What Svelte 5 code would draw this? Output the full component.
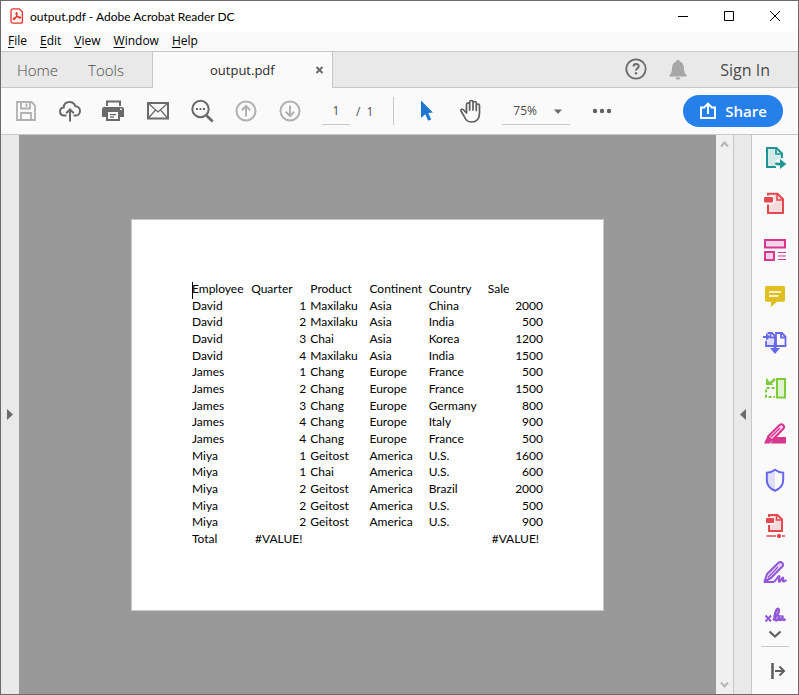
<script>
  const menus = ['File', 'Edit', 'View', 'Window', 'Help'];

  const columns = ['Employee', 'Quarter', 'Product', 'Continent', 'Country', 'Sale'];
  const rows = [
    ['David', 1, 'Maxilaku', 'Asia', 'China', 2000],
    ['David', 2, 'Maxilaku', 'Asia', 'India', 500],
    ['David', 3, 'Chai', 'Asia', 'Korea', 1200],
    ['David', 4, 'Maxilaku', 'Asia', 'India', 1500],
    ['James', 1, 'Chang', 'Europe', 'France', 500],
    ['James', 2, 'Chang', 'Europe', 'France', 1500],
    ['James', 3, 'Chang', 'Europe', 'Germany', 800],
    ['James', 4, 'Chang', 'Europe', 'Italy', 900],
    ['James', 4, 'Chang', 'Europe', 'France', 500],
    ['Miya', 1, 'Geitost', 'America', 'U.S.', 1600],
    ['Miya', 1, 'Chai', 'America', 'U.S.', 600],
    ['Miya', 2, 'Geitost', 'America', 'Brazil', 2000],
    ['Miya', 2, 'Geitost', 'America', 'U.S.', 500],
    ['Miya', 2, 'Geitost', 'America', 'U.S.', 900]
  ];

  let page = $state('1');
  let zoom = $state('75%');
</script>

<div class="window">
  <header class="titlebar">
    <svg class="logo" width="14" height="16" viewBox="0 0 14 16" fill="none" stroke="#e8352b">
      <path d="M3 .8h6.2L12.4 4v9.2a2 2 0 0 1-2 2H3a2 2 0 0 1-2-2V2.8a2 2 0 0 1 2-2z" fill="#fff5f4" stroke-width="1.3" />
      <path d="M3.4 11.3c-.6-.9 1.500-1.900 3.300-2.300 2-.5 4-.3 4 .6 0 1.100-2.400.3-3.700-1.600C6 6.600 5.700 4.600 6.500 4.500c1 0 .6 2.300-.3 4.200-.9 1.900-2.200 3.400-2.800 2.600z" stroke-width="1.1" />
    </svg>
    <span class="caption">output.pdf - Adobe Acrobat Reader DC</span>
    <div class="wincontrols">
      <button aria-label="Minimize"><svg width="12" height="12" viewBox="0 0 12 12"><path d="M1 6.500h10" /></svg></button>
      <button aria-label="Maximize"><svg width="12" height="12" viewBox="0 0 12 12"><path d="M1.500 1.500h9v9h-9z" /></svg></button>
      <button aria-label="Close"><svg width="12" height="12" viewBox="0 0 12 12"><path d="M1 1l10 10M11 1L1 11" /></svg></button>
    </div>
  </header>

  <nav class="menubar">
    {#each menus as m}
      <button><u>{m[0]}</u>{m.slice(1)}</button>
    {/each}
  </nav>

  <div class="tabs">
    <div class="fixedtabs">
      <button class="home">Home</button>
      <button class="tools">Tools</button>
    </div>
    <div class="doctab">
      <span>output.pdf</span>
      <button aria-label="Close tab">
        <svg width="9" height="9" viewBox="0 0 9 9" stroke="#6a6a6a" stroke-width="2"><path d="M1.500 1l6 6M7.500 1l-6 6" /></svg>
      </button>
    </div>
    <div class="account">
      <button aria-label="Help">
        <svg width="24" height="24" viewBox="0 0 24 24" fill="none" stroke="#6a6a6a">
          <circle cx="12" cy="11" r="9.700" stroke-width="1.800" />
          <path d="M9.500 8.500c0-3.300 5.200-3.200 5.200-.3 0 2-2.700 2-2.700 4.300" stroke-width="2" />
          <path d="M10.900 14.200h2.200v2.200h-2.200z" fill="#6a6a6a" stroke="none" />
        </svg>
      </button>
      <button aria-label="Notifications">
        <svg width="24" height="24" viewBox="0 0 24 24" fill="#a6a6a6">
          <path d="M12 2c1 0 1.700.6 1.700 1.600 2.800.8 4 3 4.200 6 .2 4 .5 6 2.600 7.400v1.500h-17V17c2.100-1.400 2.400-3.400 2.600-7.400.2-3 1.400-5.200 4.200-6C10.300 2.600 11 2 12 2zM9.500 19.500h5c-.3 1.400-1.300 2-2.500 2s-2.200-.6-2.500-2z" />
        </svg>
      </button>
      <button class="signin">Sign In</button>
    </div>
  </div>

  <div class="toolbar">
    <button class="tool" aria-label="Save">
      <svg width="24" height="24" viewBox="0 0 24 24" fill="none" stroke="#b1b1b1" stroke-width="1.800">
        <path d="M3 3h14.500L21 6.500V21H3z" /><path d="M7 3v6.500h9V3M7 21v-7h10v7" /><path d="M12.500 4.500V8" />
      </svg>
    </button>
    <button class="tool" aria-label="Upload">
      <svg width="24" height="24" viewBox="0 0 24 24" fill="none" stroke="#6a6a6a" stroke-width="2">
        <path d="M8.500 16.500H6.500C3.600 16.500 2 14.700 2 12.500c0-2 1.400-3.700 3.700-3.900C5.800 5 8.300 3 11.500 3c3 0 5 1.700 5.800 4.300 2.900 0 4.700 2 4.700 4.600 0 2.700-2 4.600-4.500 4.600h-2" />
        <path d="M12 22.500V11M8.200 14.300L12 10.500l3.800 3.800" />
      </svg>
    </button>
    <button class="tool" aria-label="Print">
      <svg width="24" height="24" viewBox="0 0 24 24" fill="#6a6a6a">
        <path d="M4 1.500h15V7H4zM6 3.500V7h11V3.500zM2 8h18q2 0 2 2v8h-4v4H4v-4H0v-8q0-2 2-2zM6 13v7h10v-7z" fill-rule="evenodd" />
        <path d="M8 15h6v1.200H8zM8 17.500h4v1.200H8z" /><path d="M18 9.500h1.800v1.500H18z" fill="#fafafa" />
      </svg>
    </button>
    <button class="tool" aria-label="Email">
      <svg width="24" height="24" viewBox="0 0 24 24" fill="none" stroke="#6a6a6a">
        <path d="M2 4h20v15.500H2z" stroke-width="2" /><path d="M2.500 4.500L12 13l9.500-8.500M2.500 19l7-8M21.500 19l-7-8" stroke-width="1.200" />
      </svg>
    </button>
    <button class="tool" aria-label="Find">
      <svg width="24" height="24" viewBox="0 0 24 24" fill="none" stroke="#6a6a6a">
        <circle cx="10.500" cy="10" r="8.200" stroke-width="2" /><path d="M16.500 16.500l6.200 6" stroke-width="2.800" />
        <path d="M6 9h2v2H6zM9.500 9h2v2h-2zM13 9h2v2h-2z" fill="#6a6a6a" stroke="none" />
      </svg>
    </button>
    <button class="tool" aria-label="Previous page">
      <svg width="24" height="24" viewBox="0 0 24 24" fill="none" stroke="#b1b1b1" stroke-width="2">
        <circle cx="12" cy="12" r="9.500" /><path d="M12 17.500V7.500M7.800 11.300L12 7l4.200 4.300" />
      </svg>
    </button>
    <button class="tool" aria-label="Next page">
      <svg width="24" height="24" viewBox="0 0 24 24" fill="none" stroke="#b1b1b1" stroke-width="2">
        <circle cx="12" cy="12" r="9.500" /><path d="M12 6.500v10M7.800 12.700L12 17l4.200-4.300" />
      </svg>
    </button>
    <label class="pager"><input aria-label="Page number" bind:value={page} /><span>/</span><span>1</span></label>
    <span class="divider"></span>
    <button class="tool" aria-label="Select">
      <svg width="24" height="24" viewBox="0 0 24 24" fill="#1f76d2"><path d="M6 1.500L18 13.500l-4.700.6 2.900 6.400-3 1.300-2.900-6.500L6 19z" /></svg>
    </button>
    <button class="tool" aria-label="Hand">
      <svg width="24" height="24" viewBox="0 0 24 24" fill="none" stroke="#5f5f5f" stroke-width="1.700" stroke-linejoin="round" stroke-linecap="round">
        <path d="M7.500 14V5.500c0-2.200 3.200-2.200 3.200 0V11M10.700 11V3c0-2 3.300-2 3.300 0v8M14 4c0-2 3.300-2 3.300 0v7.500M17.300 6.500c0-2 3.200-2 3.200 0V14c0 5.500-2.500 9-8 9-4.500 0-6-2.500-7.800-6.500L1.900 12c-.5-1.600 1.500-2.400 2.800-1L7.500 14" />
      </svg>
    </button>
    <div class="zoom">
      <select aria-label="Zoom level" bind:value={zoom}><option>75%</option><option>100%</option></select>
      <svg width="8" height="5" viewBox="0 0 8 5" fill="#6a6a6a"><path d="M0 .5h8L4 5z" /></svg>
    </div>
    <button class="tool more" aria-label="More tools">
      <svg width="24" height="24" viewBox="0 0 24 24" fill="#5f5f5f"><circle cx="5" cy="12" r="2.200" /><circle cx="12" cy="12" r="2.200" /><circle cx="19" cy="12" r="2.200" /></svg>
    </button>
    <button class="share">
      <svg width="18" height="18" viewBox="0 0 18 18" fill="none" stroke="#fff" stroke-width="2"><path d="M6 5.500H2V16h14V5.500h-4M9 12V2M5.700 5L9 1.700 12.300 5" /></svg>
      Share
    </button>
  </div>

  <main>
    <button class="leftrail" aria-label="Show navigation pane">
      <svg width="6" height="11" viewBox="0 0 6 11" fill="#6a6a6a"><path d="M0 0l6 5.500L0 11z" /></svg>
    </button>

    <section class="canvas">
      <article class="page">
        <span class="caret"></span>
        <table>
          <thead>
            <tr>{#each columns as c}<th>{c}</th>{/each}</tr>
          </thead>
          <tbody>
            {#each rows as row}
              <tr>{#each row as cell}<td class:num={typeof cell === 'number'}>{cell}</td>{/each}</tr>
            {/each}
            <tr><td>Total</td><td class="err">#VALUE!</td><td></td><td></td><td></td><td class="err">#VALUE!</td></tr>
          </tbody>
        </table>
      </article>
    </section>

    <div class="scrollbar">
      <svg width="9" height="7" viewBox="0 0 9 7"><path d="M1 5.500l3.500-4 3.500 4" /></svg>
      <svg width="9" height="7" viewBox="0 0 9 7"><path d="M1 1.500l3.500 4 3.500-4" /></svg>
    </div>

    <button class="rightrail" aria-label="Hide tools pane">
      <svg width="6" height="11" viewBox="0 0 6 11" fill="#6a6a6a"><path d="M6 0L0 5.500 6 11z" /></svg>
    </button>

    <aside>
      <div class="toollist">
        <button aria-label="Export PDF">
          <svg viewBox="0 0 24 24" fill="none" stroke="#1f9494" stroke-width="2">
            <path d="M4 2h9.500L19 7.500V21H4z" fill="#d3ebe8" stroke="none" /><path d="M19 12V7.500L13.500 2H4v19h9" /><path d="M13 2.500V8h5.500" stroke-width="1.600" />
            <circle cx="17" cy="18" r="5" fill="#fafafa" stroke="none" /><path d="M12.500 17c1 1.300 2.500 1.300 5 1" stroke-width="2.600" /><path d="M17 13l6.300 5-6.300 5z" fill="#1f9494" stroke="none" />
          </svg>
        </button>
        <button aria-label="Create PDF">
          <svg viewBox="0 0 24 24" fill="none" stroke="#e34850" stroke-width="2">
            <path d="M5 1.700h9.500l5.500 5.500V21H5z" fill="#f7dadb" /><path d="M14 2.500V8h5.500" stroke-width="1.600" /><path d="M3 3.500h7l2 6.500-3 2.500H3z" fill="#fafafa" stroke="none" /><rect x="1" y="5" width="9" height="5.500" rx="1" fill="#e34850" stroke="none" />
          </svg>
        </button>
        <button aria-label="Organize pages">
          <svg viewBox="0 0 24 24" fill="#f5d3e8" stroke="#d83790" stroke-width="2">
            <rect x="2" y="2" width="20" height="7.500" /><rect x="2" y="14" width="9" height="8" /><path d="M15 14.500h8M15 18h8M15 21.500h8" stroke-width="1.200" />
          </svg>
        </button>
        <button aria-label="Comment">
          <svg viewBox="0 0 24 24" fill="#dfbf22"><path d="M3.500 2h17Q22 2 22 3.500v12.700q0 1.500-1.500 1.500H14L8 23v-5.300H3.500q-1.500 0-1.500-1.500V3.500Q2 2 3.500 2z" /><path d="M6 8h12M6 12h9.500" stroke="#fff" stroke-width="1.500" /></svg>
        </button>
        <button aria-label="Combine files">
          <svg viewBox="0 0 24 24" fill="none" stroke="#6767ec" stroke-width="2">
            <path d="M3 9h8v6H3z" fill="#dedef9" stroke="none" /><path d="M4.500 3H9l3 3v10H3v-5M12 16h10.500V6.500L19 3h-6v13M18 3v4.500h4.500M7.500 3v4.500H12" stroke-width="1.800" />
            <path d="M0 6h3V3l4.500 4L3 10.500V8H0zM10.700 13h2.600v5H17l-5 6-5-6h3.700z" fill="#6767ec" stroke="none" />
          </svg>
        </button>
        <button aria-label="Compress">
          <svg viewBox="0 0 24 24" fill="none" stroke="#7ccc38" stroke-width="2">
            <rect x="14" y="3" width="8" height="18.500" fill="#e0f2cf" /><path d="M11.500 12H3v9h9" stroke-dasharray="3 2" /><path d="M12 3l-5 4.500" stroke-width="2.400" /><path d="M3 2l2 1.500 1 2L10.500 9H3z" fill="#7ccc38" stroke="none" />
          </svg>
        </button>
        <button aria-label="Redact">
          <svg viewBox="0 0 24 24" fill="#d83790">
            <path d="M13 15h10v6.500H7.500z" /><path d="M5 14.500L16.500 3q2-1.500 3.800.2 1.600 1.800 0 3.600L9 18.500z" fill="#f5d3e8" stroke="#d83790" stroke-width="2" /><path d="M4 15l5 4-2.500 2.500H1z" /><path d="M8 15l9-9" stroke="#d83790" stroke-width="1.200" />
          </svg>
        </button>
        <button aria-label="Protect">
          <svg viewBox="0 0 24 24" fill="none"><path d="M12 2c-2.500 2-5 2.700-8 2.700V12c0 5 3 8.500 8 10.500z" fill="#dedef9" /><path d="M12 1.800c2.500 2 5 2.900 8.200 2.900V12c0 5-3.200 8.700-8.200 10.700C7 20.700 3.800 17 3.800 12V4.700c3.200 0 5.700-.9 8.200-2.900z" stroke="#6767ec" stroke-width="2" /></svg>
        </button>
        <button aria-label="Optimize PDF">
          <svg viewBox="0 0 24 24" fill="none" stroke="#e34850" stroke-width="2">
            <path d="M6 1h8.500L19 5.500V17H6z" fill="#f7dadb" /><path d="M13.500 1.500V6h5" stroke-width="1.500" /><path d="M4 3h6l2 6-2 2H4z" fill="#fafafa" stroke="none" /><rect x="3" y="4" width="8" height="5" rx="1" fill="#e34850" stroke="none" />
            <path d="M3.500 22H13M19 22h3" stroke-width="1.600" /><circle cx="16" cy="22" r="1.700" fill="#e34850" stroke-width="1" />
          </svg>
        </button>
        <button aria-label="Fill and sign">
          <svg viewBox="0 0 24 24" fill="none" stroke="#9256d9" stroke-width="2" stroke-linejoin="round">
            <path d="M1.500 21.500L4 14 15.500 2.700q2-1.500 3.800.2 1.700 1.900 0 3.600L8 18z" fill="#e4d7f5" /><path d="M5 17.500L15 7" stroke-width="1.200" /><path d="M1 22h9c3 0 4.500-6 6-6s-1.500 6 .5 5.800c1.500-.3 2-4.300 3.300-4.200s-.8 4 .7 4c1 0 1.500-.6 3-1.600" />
          </svg>
        </button>
        <button aria-label="Certificates">
          <svg viewBox="0 0 24 24" fill="none" stroke="#9256d9" stroke-width="2.400">
            <path d="M2.500 9.500l5.500 6M8 9.500l-5.500 6" stroke-width="2" /><path d="M10 14c4-3 7-9.500 5.500-11-2-1.500-4.500 6-3.800 9.500.5 3.500 4.300 2 5-3.500-1 4-.5 5.500 1 5 1.500-.7 1.500-3 2-4.500-.7 4 .5 5.500 2.800 3.500" />
          </svg>
        </button>
      </div>
      <button class="scrolldown" aria-label="More tools below">
        <svg viewBox="0 0 24 24" fill="none" stroke="#5f5f5f" stroke-width="2.200"><path d="M6.500 9.500l5.500 5 5.500-5" /></svg>
      </button>
      <hr />
      <button class="collapse" aria-label="Collapse pane">
        <svg viewBox="0 0 24 24" fill="none" stroke="#5f5f5f" stroke-width="2"><path d="M9.500 4v16" stroke-width="2.600" /><path d="M12 12h8.500M16.500 7.500L21 12l-4.500 4.500" /></svg>
      </button>
    </aside>
  </main>
</div>

<style>
  :global(body) { margin: 0; }
  * { box-sizing: border-box; }
  button { border: 0; padding: 0; background: none; color: inherit; font: inherit; cursor: pointer; }
  svg { display: block; flex: none; }

  .window {
    display: flex;
    flex-direction: column;
    min-height: 100vh;
    border: 1px solid #6b696b;
    background: #fafafa;
    font-family: 'Open Sans', 'Noto Sans', sans-serif;
    color: #4b4b4b;
  }

  .titlebar { display: flex; align-items: center; height: 30px; padding-left: 9px; background: #fff; color: #000; font-family: Lato, sans-serif; font-size: 12px; }
  .caption { flex: 1; margin-left: 6px; }
  .wincontrols { display: flex; }
  .wincontrols button { display: grid; place-items: center; width: 46px; height: 30px; }
  .wincontrols svg { fill: none; stroke: #000; }

  .menubar { display: flex; gap: 13px; height: 20px; padding-left: 7px; color: #000; font-size: 12px; line-height: 20px; }
  .menubar u { text-underline-offset: 2px; }

  .tabs { display: flex; height: 37px; border-top: 1px solid #c8c8c8; background: #e9e9e9; font-size: 15px; }
  .fixedtabs { display: flex; align-items: center; gap: 30px; width: 152px; padding-left: 16px; border-right: 1px solid #c8c8c8; border-bottom: 1px solid #c8c8c8; font-weight: 300; }
  .doctab { display: flex; align-items: center; justify-content: space-between; width: 180px; padding: 0 8px 0 57px; border-right: 1px solid #c8c8c8; background: #fafafa; color: #2b2b2b; font-size: 13px; }
  .account { display: flex; flex: 1; align-items: center; justify-content: flex-end; gap: 18px; padding-right: 28px; border-bottom: 1px solid #c8c8c8; }
  .signin { margin-left: 12px; font-size: 16px; }

  .toolbar { display: flex; align-items: center; height: 47px; padding: 0 15px 0 3px; border-bottom: 1px solid #c8c8c8; font-size: 12px; }
  .tool { display: grid; place-items: center; width: 44px; height: 44px; }
  .pager { display: flex; align-items: center; gap: 6px; margin-left: 10px; }
  .pager input { width: 28px; height: 28px; padding: 0; border: 0; border-bottom: 1px solid #c8c8c8; background: none; color: inherit; font: inherit; text-align: center; }
  .divider { width: 1px; height: 28px; margin: 0 11px 0 20px; background: #c8c8c8; }
  .zoom { position: relative; margin-left: 9px; }
  .zoom select { width: 68px; height: 28px; padding: 0 0 0 11px; border: 0; border-bottom: 1px solid #c8c8c8; border-radius: 0; appearance: none; background: none; color: inherit; font: inherit; }
  .zoom svg { position: absolute; right: 8px; top: 12px; pointer-events: none; }
  .more { margin-left: 10px; }
  .share { display: flex; align-items: center; justify-content: center; gap: 8px; width: 100px; height: 32px; margin-left: auto; border-radius: 16px; background: #2680eb; color: #fff; font-size: 15px; font-weight: 600; }

  main { display: flex; flex: 1; }
  .leftrail, .rightrail { display: grid; place-items: center; width: 18px; background: #e9e9e9; }
  .rightrail { border-left: 1px solid #c8c8c8; border-right: 1px solid #c8c8c8; width: 19px; }
  .canvas { display: grid; flex: 1; place-items: center; background: #999; }
  .page { position: relative; width: 473px; min-height: 392px; padding: 61px 56px 62px 60px; border: 1px solid #c8c8c8; background: #fff; }
  .caret { position: absolute; left: 60px; top: 62px; width: 1px; height: 17px; background: #000; }
  table { width: 100%; height: 267px; border-collapse: collapse; table-layout: fixed; color: #000; font-family: Lato, sans-serif; font-size: 12px; line-height: 14px; }
  th, td { padding: 0; text-align: left; font-weight: 400; white-space: nowrap; }
  th { height: 17px; }
  td.num { padding-right: 4px; text-align: right; }
  td.err { padding-right: 4px; text-align: center; }

  .scrollbar { display: flex; flex-direction: column; align-items: center; justify-content: space-between; width: 17px; padding: 6px 0; background: #f0f0f0; }
  .scrollbar svg { fill: none; stroke: #b5b5b5; stroke-width: 2; }

  aside { display: flex; flex-direction: column; align-items: center; width: 46px; }
  aside svg { width: 24px; height: 24px; }
  aside button { display: grid; flex: none; place-items: center; width: 46px; height: 46px; }
  .toollist { flex: 1 1 0; min-height: 0; overflow: hidden; }
  aside .scrolldown { height: 24px; }
  hr { width: 28px; height: 1px; margin: 0; border: 0; background: #c8c8c8; }
  aside .collapse { height: 47px; }
</style>
